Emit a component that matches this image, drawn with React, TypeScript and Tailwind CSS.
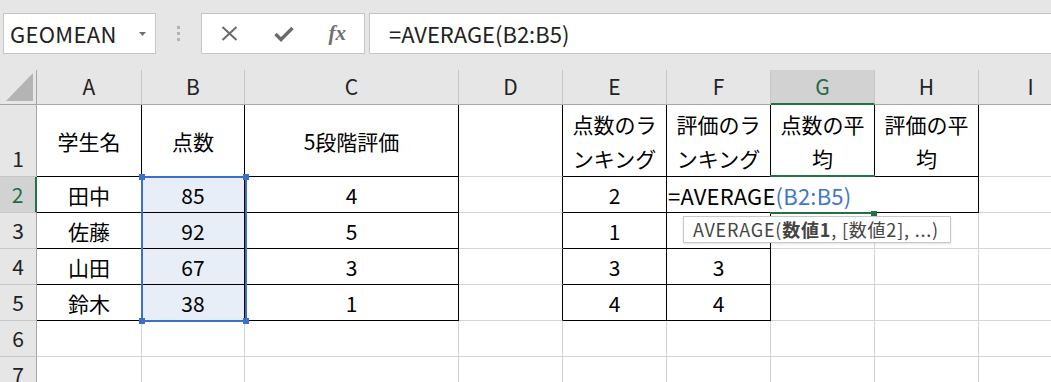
import React from 'react';

const FONT = "font-['Noto_Sans_CJK_JP','Noto_Sans',sans-serif]";

// A..I plus a filler column for the rest of the window
const COLS = ['A', 'B', 'C', 'D', 'E', 'F', 'G', 'H', 'I'];
const ROWS = [1, 2, 3, 4, 5, 6, 7];

const DATA: Record<string, React.ReactNode> = {
    A1: '学生名',
    B1: '点数',
    C1: '5段階評価',
    E1: <>点数のラ<br />ンキング</>,
    F1: <>評価のラ<br />ンキング</>,
    G1: <>点数の平<br />均</>,
    H1: <>評価の平<br />均</>,
    A2: '田中', B2: '85', C2: '4', E2: '2',
    A3: '佐藤', B3: '92', C3: '5', E3: '1',
    A4: '山田', B4: '67', C4: '3', E4: '3', F4: '3',
    A5: '鈴木', B5: '38', C5: '1', E5: '4', F5: '4',
};

// cells that carry a black border
const boxed = (r: number, c: number) => {
    if (r < 1 || r > 5) return false;
    if (c >= 0 && c <= 2) return true;
    if (r <= 2 && c >= 4 && c <= 7) return true;
    if (r >= 3 && (c === 4 || c === 5)) return true;
    return false;
};

const Cell = ({ r, c, span, children }: { r: number; c: number; span?: boolean; children?: React.ReactNode }) => {
    const last = span ? c + 2 : c;
    const right = boxed(r, last) || boxed(r, last + 1);
    const bottom = boxed(r, c) || boxed(r + 1, c);
    const selected = c === 1 && r >= 2 && r <= 5;
    return (
        <div
            className={`flex items-center leading-[34px] text-black border-r border-b ${
                span
                    ? 'col-span-3 justify-start pl-[1px] text-[22px] tracking-[0.2px]'
                    : 'justify-center text-center text-[21px]'
            } ${right ? 'border-r-black' : 'border-r-[#d4d4d4]'} ${
                bottom ? 'border-b-black' : 'border-b-[#d4d4d4]'
            } ${selected ? 'bg-[#e8eef8]' : 'bg-white'}`}
        >
            <div className="whitespace-nowrap">{children}</div>
        </div>
    );
};

const NameBox = () => (
    <div className="ml-[3px] w-[153px] h-[41px] bg-white border border-[#c6c6c6] flex items-center justify-between pl-[6px] pr-[9px]">
        <span className="text-[22px] text-[#222] tracking-[0.3px]">GEOMEAN</span>
        <svg width="7" height="4" viewBox="0 0 7 4">
            <path d="M0 0 H7 L3.5 4 Z" fill="#707070" />
        </svg>
    </div>
);

const FormulaButtons = () => (
    <div className="ml-[21px] w-[164px] h-[41px] bg-white border border-[#c6c6c6] flex items-center pl-[1px]">
        <div className="w-[54px] flex justify-center">
            <svg width="17" height="15" viewBox="0 0 17 15">
                <path d="M1.5 1 L15.5 14 M15.5 1 L1.5 14" stroke="#6b6b6b" strokeWidth="2" />
            </svg>
        </div>
        <div className="w-[54px] flex justify-center">
            <svg width="20" height="16" viewBox="0 0 20 16">
                <path d="M1.5 8 L7 13.5 L18.5 2" stroke="#6b6b6b" strokeWidth="3.4" fill="none" />
            </svg>
        </div>
        <div className="w-[54px] flex justify-center">
            <span className="font-['Liberation_Serif',serif] italic font-bold text-[21px] text-[#707070] leading-none">fx</span>
        </div>
    </div>
);

export default function App() {
    return (
        <div className={`w-[1051px] h-[382px] overflow-hidden bg-[#e6e6e6] ${FONT}`}>
            {/* toolbar */}
            <div className="h-[70px] flex items-start pt-[13px]">
                <NameBox />
                <div className="ml-[21px] mt-[13px] flex flex-col gap-[3px]">
                    <div className="w-[3px] h-[3px] bg-[#b3b3b3]" />
                    <div className="w-[3px] h-[3px] bg-[#b3b3b3]" />
                    <div className="w-[3px] h-[3px] bg-[#b3b3b3]" />
                </div>
                <FormulaButtons />
                <div className="ml-[4px] flex-1 h-[41px] bg-white border border-r-0 border-[#c6c6c6] flex items-center pl-[19px]">
                    <span className="text-[22px] text-[#222]">=AVERAGE(B2:B5)</span>
                </div>
            </div>

            {/* sheet */}
            <div className="relative grid grid-cols-[37px_105px_103px_214px_104px_104px_104px_104px_104px_104px_1fr] grid-rows-[35px_72px_repeat(6,36px)]">
                <div className="bg-[#e6e6e6] border-r border-b border-[#a6a6a6] flex items-end justify-end pr-[3px] pb-[3px]">
                    <svg width="27" height="28" viewBox="0 0 27 28">
                        <path d="M27 0 V28 H0 Z" fill="#b4b4b4" />
                    </svg>
                </div>
                {COLS.map((col) => (
                    <div
                        key={col}
                        className={`flex items-center justify-center text-[21px] border-r border-r-[#c6c6c6] ${
                            col === 'G'
                                ? 'bg-[#d2d2d2] text-[#1e6b45] border-b-2 border-b-[#217346]'
                                : 'bg-[#e6e6e6] text-[#222] border-b border-b-[#a6a6a6]'
                        }`}
                    >
                        {col}
                    </div>
                ))}
                <div className="bg-[#e6e6e6] border-b border-b-[#a6a6a6]" />

                {ROWS.map((r) => (
                    <React.Fragment key={r}>
                        <div
                            className={`flex justify-center text-[21px] border-b border-b-[#c6c6c6] ${
                                r === 1 ? 'items-end pb-[2px]' : 'items-center'
                            } ${
                                r === 2
                                    ? 'bg-[#d2d2d2] text-[#1e6b45] border-r-2 border-r-[#217346]'
                                    : 'bg-[#e6e6e6] text-[#222] border-r border-r-[#a6a6a6]'
                            }`}
                        >
                            {r}
                        </div>
                        {COLS.map((col, c) => {
                            if (r === 2 && (col === 'G' || col === 'H')) return null;
                            if (r === 2 && col === 'F') {
                                return (
                                    <Cell key={col} r={r} c={c} span>
                                        =AVERAGE<span className="text-[#3f76cc]">(B2:B5)</span>
                                    </Cell>
                                );
                            }
                            return (
                                <Cell key={col} r={r} c={c}>
                                    {DATA[`${col}${r}`]}
                                </Cell>
                            );
                        })}
                        <Cell r={r} c={9} />
                    </React.Fragment>
                ))}

                {/* range B2:B5 */}
                <div className="absolute left-[141px] top-[106px] w-[106px] h-[146px] border-2 border-[#3b70c9] pointer-events-none">
                    <div className="absolute -left-[4px] -top-[4px] w-[6px] h-[6px] bg-[#3b70c9]" />
                    <div className="absolute -right-[4px] -top-[4px] w-[6px] h-[6px] bg-[#3b70c9]" />
                    <div className="absolute -left-[4px] -bottom-[4px] w-[6px] h-[6px] bg-[#3b70c9]" />
                    <div className="absolute -right-[4px] -bottom-[4px] w-[6px] h-[6px] bg-[#3b70c9]" />
                </div>

                {/* active cell G2 */}
                <div className="absolute left-[770px] top-[105px] w-[105px] h-[2px] bg-[#217346]" />
                <div className="absolute left-[770px] top-[142px] w-[105px] h-[2px] bg-[#217346]" />
                <div className="absolute left-[871px] top-[141px] w-[6px] h-[5px] bg-[#217346]" />

                {/* argument hint */}
                <div className="absolute left-[683px] top-[146px] h-[27px] pl-[9px] pr-[11px] bg-white border border-[#c8c8c8] shadow-[0_1px_2px_rgba(0,0,0,0.12)] flex items-center text-[18px] tracking-[0.8px] text-[#444] whitespace-nowrap">
                    AVERAGE(<b className="font-bold">数値1</b>, [数値2], ...)
                </div>
            </div>
        </div>
    );
}
